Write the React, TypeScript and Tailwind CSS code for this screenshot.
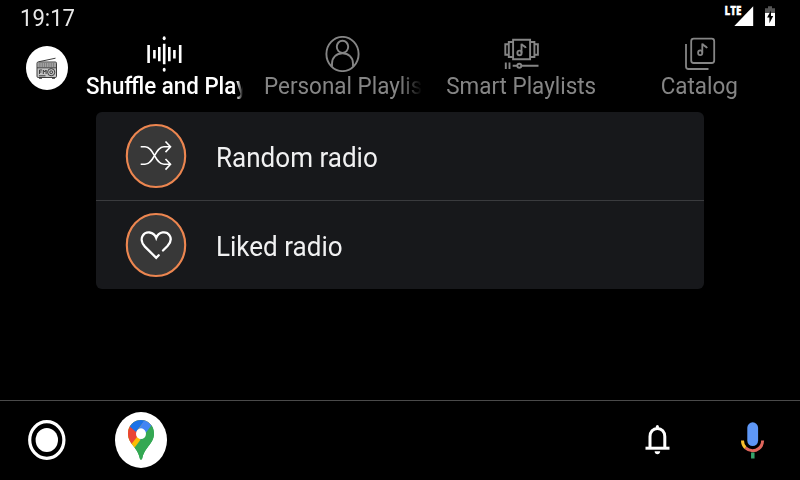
import type { ReactNode } from "react";

type TabProps = { icon: ReactNode; viewBox: string; label: string; active?: boolean; clipped?: boolean };

function Tab({ icon, viewBox, label, active, clipped }: TabProps) {
  return (
    <div className={`flex flex-col items-center ${active ? "text-white" : "text-[#858585]"}`}>
      <svg width="40" height="36" viewBox={viewBox} fill="none" stroke="currentColor">
        {icon}
      </svg>
      <div
        className={`flex h-7 w-[158px] overflow-hidden ${clipped ? "justify-start" : "justify-center"} ${
          active
            ? "[mask-image:linear-gradient(to_right,black_96%,transparent)]"
            : clipped
              ? "[mask-image:linear-gradient(to_right,black_86%,transparent)]"
              : ""
        }`}
      >
        <span
          className={`shrink-0 text-[24px] leading-7 whitespace-nowrap ${clipped ? "origin-left" : "origin-center"} ${active ? "ml-px scale-x-[0.93] font-medium" : "scale-x-[0.935]"}`}
        >
          {label}
        </span>
      </div>
    </div>
  );
}

function WaveIcon() {
  return (
    <>
      <path
        strokeWidth="2.6"
        d="M148.600 45v18M154.400 50v8.500M159.300 47v14.300M164.200 43.700v20.600M169.300 47v14.300M174.400 50v8.500M180.200 45v18"
      />
      <ellipse cx="164.200" cy="38.200" rx="1.500" ry="2" fill="currentColor" stroke="none" />
      <ellipse cx="164.200" cy="69.800" rx="1.500" ry="2" fill="currentColor" stroke="none" />
    </>
  );
}

function PersonIcon() {
  return (
    <g strokeWidth="1.900">
      <ellipse cx="342.500" cy="54" rx="16.100" ry="17.100" />
      <ellipse cx="342.500" cy="46.800" rx="5.700" ry="6.100" />
      <path d="M332 66.500v-3c0-6 4.500-10.300 10.500-10.300s10.500 4.300 10.500 10.300v3" />
    </g>
  );
}

function CarouselIcon() {
  return (
    <g strokeWidth="1.900">
      <path d="M512.600 39.800h17v19.500h-17z" />
      <path d="M512.600 42h-4.300v15h4.300M529.600 42h4.300v15h-4.300M508.300 44.300h-3.500v10.500h3.500M533.900 44.300h3.500v10.500h-3.500" />
      <path d="M521 52.800v-9c.8 2.200 3.800 2 4.300 4.200" />
      <ellipse cx="519" cy="52.900" rx="2.100" ry="2.300" />
      <path d="M505.300 62.500v6.500M509 62.500v6.500M512.200 65.800h4.500M521 65.800h17" />
      <circle cx="518.800" cy="65.800" r="2" />
    </g>
  );
}

function CatalogIcon() {
  return (
    <g strokeWidth="1.800">
      <rect x="690.700" y="38.700" width="23" height="24.300" rx="2.500" />
      <path d="M685.500 44v22.500q0 2.500 2.500 2.500h20" />
      <path d="M701.800 52.500v-9c.5 2.200 3.700 2.400 4.800 4.700" />
      <ellipse cx="699.700" cy="52.800" rx="2.100" ry="2.400" />
    </g>
  );
}

function RadioLogo() {
  return (
    <div className="flex h-11 w-[42px] items-center justify-center rounded-[50%] bg-white">
      <svg width="24" height="26" viewBox="0 0 24 26" fill="none" stroke="#3c3c3c" strokeWidth="1">
        <path d="M3.500 6.800 20.500 3.200" />
        <rect x="2" y="7" width="19.500" height="15.500" rx="1.200" fill="#c4c4c4" />
        <path d="M3.500 9h17M3.500 11h17" strokeDasharray="1.300 .5" strokeWidth="1.200" />
        <path d="M2 12.800h19.500M4 23.300h3M17 23.300h3M4 20.800h6.500" />
        <circle cx="16.200" cy="17.200" r="3.600" />
        <circle cx="16.200" cy="17.200" r="1.400" />
        <path d="M4.500 19v-4h2.600M4.500 17h2M8.300 19v-4l1.400 2 1.400-2v4" />
      </svg>
    </div>
  );
}

function Row({ label, children }: { label: string; children: ReactNode }) {
  return (
    <div className="flex h-[88px] items-center pl-[29px]">
      <svg width="62" height="66" viewBox="0 0 62 66" fill="none" stroke="white">
        <ellipse cx="31" cy="33" rx="29.200" ry="31" fill="#383838" stroke="#ed8650" strokeWidth="2.100" />
        {children}
      </svg>
      <span className="ml-[29px] origin-left scale-x-[0.93] pt-[3px] text-[28px] leading-8 whitespace-nowrap text-[#f1f1f2]">
        {label}
      </span>
    </div>
  );
}

export default function App() {
  return (
    <div className="flex h-[480px] w-[800px] flex-col overflow-hidden bg-black font-['Roboto',sans-serif] text-white">
      <header className="flex h-9 items-center justify-between pl-5">
        <span className="origin-left scale-x-[0.92] text-[24px] leading-9 text-[#e8e8e8]">19:17</span>
        <svg width="80" height="36" viewBox="720 0 80 36" fill="white">
          <path d="M753.200 6.300V26H734.300z" />
          <text
            x="724.500"
            y="15.200"
            fontSize="11.500"
            fontWeight="800"
            textLength="17"
            lengthAdjust="spacingAndGlyphs"
            stroke="white"
            strokeWidth="0.300"
            fontFamily="Open Sans"
          >
            LTE
          </text>
          <path d="M768 6.300h4v2h3v5.200h-10V8.300h3z" fill="#555" />
          <path d="M765 13h10v13h-10z" />
          <path d="M771 10.500v5.500h2.200l-3.800 7.200v-5.700h-2.300z" fill="black" />
        </svg>
      </header>

      <nav className="flex h-[76px]">
        <div className="w-[74px] pt-[10px] pl-[26px]">
          <RadioLogo />
        </div>
        <div className="grid grid-cols-[180px_178px_179px_177px]">
          <Tab label="Shuffle and Play" viewBox="144 36 40 36" icon={<WaveIcon />} active clipped />
          <Tab label="Personal Playlists" viewBox="323 36 40 36" icon={<PersonIcon />} clipped />
          <Tab label="Smart Playlists" viewBox="501.500 36 40 36" icon={<CarouselIcon />} />
          <Tab label="Catalog" viewBox="679.500 36 40 36" icon={<CatalogIcon />} />
        </div>
      </nav>

      <main className="h-[288px] px-24">
        <div className="h-[177px] rounded-md bg-[#17181b]">
          <Row label="Random radio">
            <path
              strokeWidth="1.600"
              d="M15.700 23.800h4.300c9 0 10 17.500 19 17.500h6.300M15.700 41.300h4.300c9 0 10-17.500 19-17.500h6.300M40.500 18.500l5 5.300-5 5.300M40.500 36l5 5.300-5 5.300"
            />
          </Row>
          <div className="h-px bg-[#3a3b3e]" />
          <Row label="Liked radio">
            <path
              strokeWidth="2.300"
              strokeLinecap="round"
              d="M38 38.500l4.500-4.500c3.300-3.700 4-7.700 2-10.700-3-4.500-10.800-4-13.300 2.600-2.500-6.600-10.500-7-13.300-2.500-2 3-1.500 7.500 2 11.200L31.200 45.800l2.500-2.500"
            />
          </Row>
        </div>
      </main>

      <footer className="flex h-20 items-center border-t border-[#4a4a4a] pb-[2px]">
        <svg className="ml-[27px]" width="40" height="42" viewBox="27 419 40 42" fill="none" stroke="white">
          <ellipse cx="46.800" cy="440" rx="17.100" ry="18.300" strokeWidth="3.200" />
          <ellipse cx="46.800" cy="440" rx="11.200" ry="12" fill="white" stroke="none" />
        </svg>
        <div className="ml-[48px] flex h-14 w-[52px] items-center justify-center rounded-[50%] bg-white">
          <svg width="28" height="42" viewBox="0 0 28 42">
            <clipPath id="pin">
              <path d="M14 1C6.500 1 1 7 1 14.500c0 5.500 3 9.500 6.500 14 3 4 4.300 6.500 5.200 10.500.4 2.200 2.200 2.200 2.600 0 1-4.500 2.500-7 5.200-10.500C24 24 27 20 27 14.500 27 7 21.500 1 14 1z" />
            </clipPath>
            <g clipPath="url(#pin)">
              <path d="M0 0h28v42H0z" fill="#34a853" />
              <path d="M0 0h28v6L7 31 0 24z" fill="#fbbc04" />
              <path d="M0 4 13 14 4.500 25 0 25z" fill="#ea4335" />
              <path d="M2 0h17L9 13 1 6z" fill="#1a73e8" />
              <path d="M18 0h12v7L14 22l-4-9z" fill="#4285f4" />
              <path d="M25.500 5 28 7v35H8L6.500 30z" fill="#34a853" />
            </g>
            <ellipse cx="14" cy="14.700" rx="5" ry="5.400" fill="white" />
          </svg>
        </div>
        <svg className="ml-[475px]" width="32" height="36" viewBox="642 422 32 36" fill="none" stroke="white">
          <path strokeWidth="3" d="M650 448v-11.500c0-4.500 3-8 7.400-8s7.400 3.500 7.400 8V448" />
          <path strokeWidth="3" d="M645.500 448.200h24" />
          <path strokeWidth="3" strokeLinecap="round" d="M657.400 426.500v2" />
          <path stroke="none" fill="white" d="M654.600 451.300h5.600c0 4-5.600 4-5.600 0z" />
        </svg>
        <svg className="ml-[64px]" width="30" height="42" viewBox="738 419 30 42" fill="none">
          <rect x="747.300" y="422.300" width="10.800" height="23.700" rx="5.400" fill="#5e97f6" />
          <path d="M742.500 440.500c0 3.300 1.200 5.700 3 7.400" stroke="#fbc02d" strokeWidth="3" />
          <path d="M745.500 447.900c4.500 4 10 3.300 13.300.6 2.500-2 3.800-4.700 3.800-8" stroke="#e0665c" strokeWidth="3" />
          <path d="M752.800 452.500v6" stroke="#34a36a" strokeWidth="3.500" />
        </svg>
      </footer>
    </div>
  );
}
